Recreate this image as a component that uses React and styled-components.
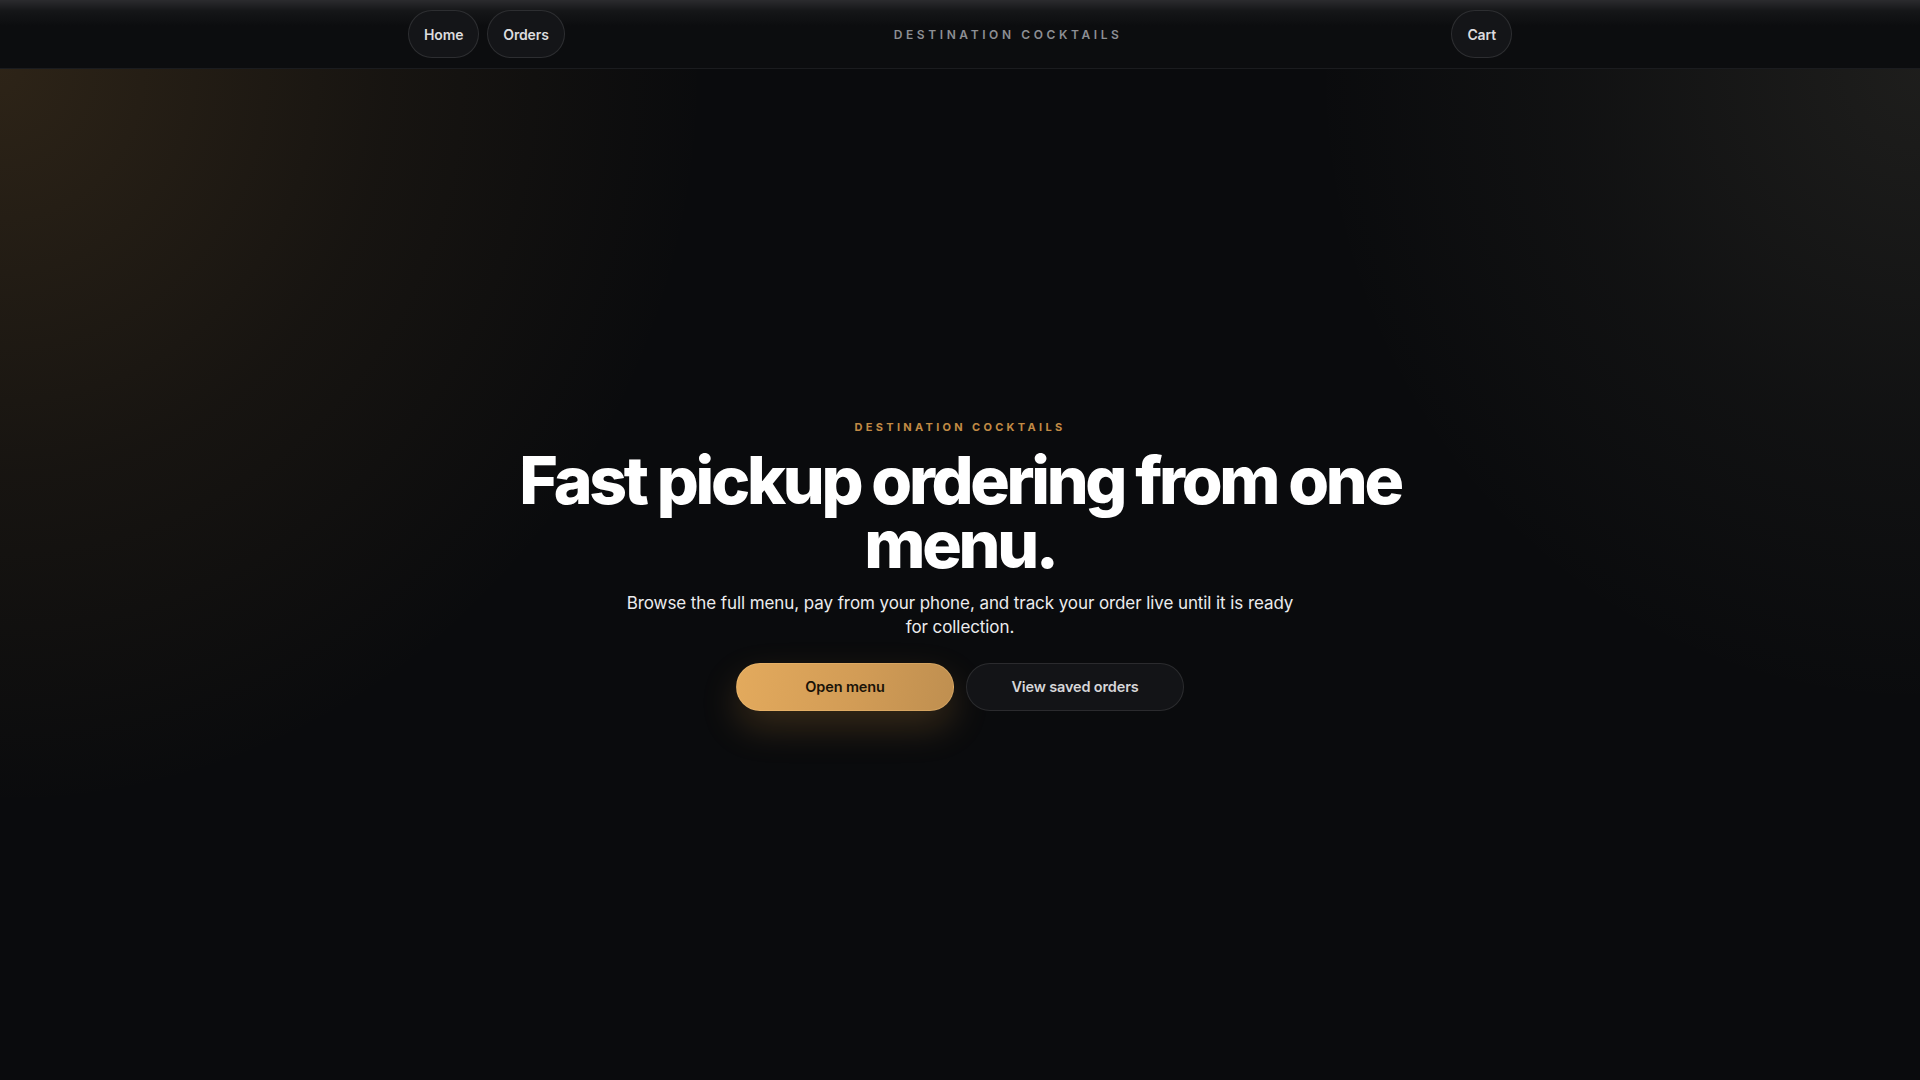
import React from 'react';
import styled, {createGlobalStyle} from 'styled-components';

const GlobalStyle = createGlobalStyle`
    * {
        box-sizing: border-box;
    }
    html, body {
        margin: 0;
        padding: 0;
        background: #0a0b0d;
        color: #f4f4f5;
        font-family: Inter, "Noto Sans", "Liberation Sans", sans-serif;
        -webkit-font-smoothing: antialiased;
    }
`;

export default class App extends React.Component {
    render() {
        return (
            <Page>
                <GlobalStyle/>
                <TopBar>
                    <TopBarInner>
                        <NavGroup>
                            <PillLink>Home</PillLink>
                            <PillLink>Orders</PillLink>
                        </NavGroup>
                        <BrandTitle>Destination Cocktails</BrandTitle>
                        <NavGroup>
                            <PillLink>Cart</PillLink>
                        </NavGroup>
                    </TopBarInner>
                </TopBar>
                <Hero>
                    <HeroContent>
                        <Eyebrow>Destination Cocktails</Eyebrow>
                        <Headline>Fast pickup ordering from one menu.</Headline>
                        <Lead>
                            Browse the full menu, pay from your phone, and track your order live until it is ready for collection.
                        </Lead>
                        <Actions>
                            <ActionButton primary>Open menu</ActionButton>
                            <ActionButton>View saved orders</ActionButton>
                        </Actions>
                    </HeroContent>
                </Hero>
            </Page>
        )
    }
}

const Page = styled.div`
    min-height: 100vh;
    display: flex;
    flex-direction: column;
    background: #0a0b0d;
`;

const TopBar = styled.header`
    height: 69px;
    border-bottom: 1px solid #1b1c1f;
    background: linear-gradient(180deg, #2b2b2e 0, #151618 11px, #0c0d0f 26px, #0c0d0f 100%);
`;

const TopBarInner = styled.nav`
    max-width: 1104px;
    height: 100%;
    margin: 0 auto;
    display: flex;
    align-items: center;
`;

const NavGroup = styled.div`
    display: flex;
    gap: 8px;
`;

const PillLink = styled.a`
    height: 48px;
    padding: 0 15px;
    display: inline-flex;
    align-items: center;
    border-radius: 999px;
    border: 1px solid rgba(255, 255, 255, 0.11);
    background: #141518;
    color: #dcdcde;
    font-size: 14px;
    font-weight: 600;
    letter-spacing: -0.01em;
    cursor: pointer;
`;

const BrandTitle = styled.div`
    flex: 1;
    text-align: center;
    font-size: 12px;
    font-weight: 600;
    letter-spacing: 0.3em;
    text-transform: uppercase;
    color: #8d8f94;
`;

const Hero = styled.main`
    flex: 1;
    display: flex;
    align-items: center;
    justify-content: center;
    padding: 0 24px 20px;
    background:
        radial-gradient(ellipse 860px 900px at 0 0, rgba(176, 128, 62, 0.21) 0, rgba(176, 128, 62, 0.08) 45%, transparent 82%),
        radial-gradient(ellipse 760px 800px at 100% 0, rgba(190, 180, 150, 0.11) 0, rgba(190, 180, 150, 0.04) 45%, transparent 80%),
        #0a0b0d;
`;

const HeroContent = styled.section`
    display: flex;
    flex-direction: column;
    align-items: center;
    text-align: center;
`;

const Eyebrow = styled.div`
    font-size: 11px;
    line-height: 16px;
    font-weight: 700;
    letter-spacing: 0.3em;
    text-transform: uppercase;
    color: #c28b45;
    margin-bottom: 13px;
`;

const Headline = styled.h1`
    margin: 0;
    max-width: 960px;
    font-size: 66px;
    line-height: 64px;
    font-weight: 800;
    letter-spacing: -0.05em;
    color: #ffffff;
`;

const Lead = styled.p`
    margin: 15px 0 0;
    max-width: 680px;
    font-size: 17px;
    line-height: 24px;
    color: #ececee;
    letter-spacing: -0.005em;
`;

const Actions = styled.div`
    margin-top: 24px;
    display: flex;
    gap: 12px;
`;

const ActionButton = styled.button`
    min-width: 218px;
    height: 48px;
    padding: 0 24px;
    border-radius: 999px;
    font-family: inherit;
    font-size: 14.5px;
    font-weight: 600;
    letter-spacing: -0.01em;
    cursor: pointer;
    ${props => props.primary ? `
        border: 1px solid rgba(255, 210, 140, 0.25);
        background: linear-gradient(100deg, #e3aa5d 0%, #d29c56 55%, #bf8f50 100%);
        color: #1a1308;
        box-shadow: 0 16px 36px rgba(214, 148, 64, 0.22);
        ` : `
        border: 1px solid rgba(255, 255, 255, 0.1);
        background: #131417;
        color: #d6d6d8;
    `};
`;
